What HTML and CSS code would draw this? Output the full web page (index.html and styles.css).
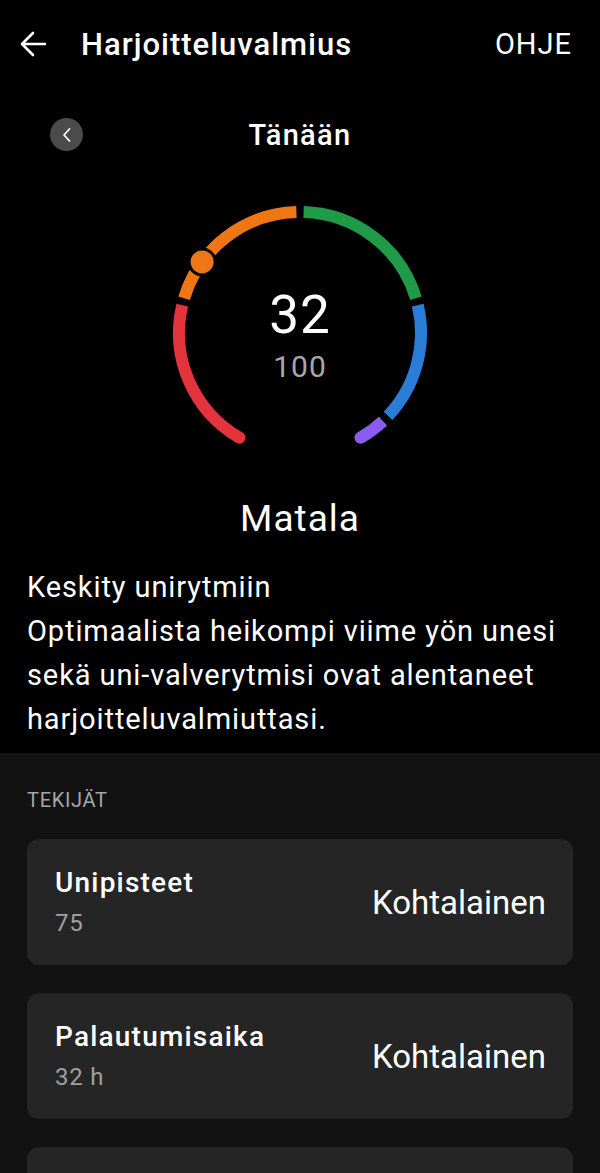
FILE: index.html
```html
<!DOCTYPE html>
<html lang="fi">
<head>
    <meta charset="UTF-8">
    <meta name="viewport" content="width=device-width, initial-scale=1.0">
    <title>Harjoitteluvalmius</title>
    <link rel="stylesheet" href="styles.css">
</head>
<body>
    <header class="topbar">
        <svg class="back-icon" width="28" height="28" viewBox="0 0 28 28">
            <path d="M26 14H3M14 3L3 14l11 11" fill="none" stroke="#fff" stroke-width="2.6" stroke-linecap="round" stroke-linejoin="round"/>
        </svg>
        <h1 class="title">Harjoitteluvalmius</h1>
        <span class="help">OHJE</span>
    </header>

    <div class="day-nav">
        <button class="prev-btn">
            <svg width="14" height="16" viewBox="0 0 14 16">
                <path d="M9.5 2L4 8l5.5 6" fill="none" stroke="#fff" stroke-width="1.8" stroke-linecap="round" stroke-linejoin="round"/>
            </svg>
        </button>
        <span class="day">Tänään</span>
    </div>

    <div class="gauge">
        <svg width="280" height="250" viewBox="0 0 280 250">
            <!-- 300 astetta, 3 astetta / piste -->
            <path d="M79.5 237.79A121 121 0 0 1 22.25 105.16" class="seg" stroke="#e3333b"/>
            <circle cx="79.5" cy="237.79" r="6" fill="#e3333b"/>
            <path d="M24.1 98.23A121 121 0 0 1 136.41 12.05" class="seg" stroke="#ef7615"/>
            <path d="M143.59 12.05A121 121 0 0 1 255.9 98.23" class="seg" stroke="#1f9a47"/>
            <path d="M257.75 105.16A121 121 0 0 1 228.06 215.98" class="seg" stroke="#2a7dd6"/>
            <path d="M222.98 221.06A121 121 0 0 1 200.5 237.79" class="seg" stroke="#8a5cf2"/>
            <circle cx="200.5" cy="237.79" r="6" fill="#8a5cf2"/>
            <circle cx="42.11" cy="61.88" r="13" fill="#ef7615" stroke="#000" stroke-width="3"/>
            <text x="140" y="133" class="score">32</text>
            <text x="140" y="177" class="max">100</text>
        </svg>
    </div>

    <div class="level">Matala</div>

    <div class="advice">
        <p>Keskity unirytmiin</p>
        <p>Optimaalista heikompi viime yön unesi sekä uni-valverytmisi ovat alentaneet harjoitteluvalmiuttasi.</p>
    </div>

    <section class="factors">
        <h2>TEKIJÄT</h2>
        <div class="factor-card">
            <div>
                <h3>Unipisteet</h3>
                <p>75</p>
            </div>
            <span class="rating">Kohtalainen</span>
        </div>
        <div class="factor-card">
            <div>
                <h3>Palautumisaika</h3>
                <p>32 h</p>
            </div>
            <span class="rating">Kohtalainen</span>
        </div>
        <div class="factor-card"></div>
    </section>
</body>
</html>
```

FILE: styles.css
```css
body {
    font-family: Roboto, 'Liberation Sans', sans-serif;
    margin: 0;
    background-color: #000;
    color: #fff;
}
.topbar {
    display: flex;
    align-items: center;
    height: 88px;
    padding: 0 28px 0 19px;
}
.back-icon {
    margin-right: 34px;
}
.title {
    flex: 1;
    margin: 0;
    font-size: 31px;
    font-weight: 500;
    letter-spacing: 1px;
}
.help {
    font-size: 29px;
    letter-spacing: 1px;
}
.day-nav {
    display: flex;
    align-items: center;
    justify-content: center;
    position: relative;
    height: 94px;
}
.prev-btn {
    position: absolute;
    left: 50px;
    top: 30px;
    width: 33px;
    height: 33px;
    border: none;
    border-radius: 50%;
    background-color: #4b4b4b;
    display: flex;
    align-items: center;
    justify-content: center;
    padding: 0;
}
.day {
    font-size: 29px;
    font-weight: 500;
    letter-spacing: 1.3px;
}
.gauge {
    display: flex;
    justify-content: center;
    margin-top: 18px;
}
.gauge svg {
    display: block;
}
.seg {
    fill: none;
    stroke-width: 12;
}
.score {
    font-family: Roboto, sans-serif;
    font-size: 53px;
    fill: #fff;
    text-anchor: middle;
    letter-spacing: 1px;
}
.max {
    font-family: Roboto, sans-serif;
    font-size: 30px;
    fill: #a8a8a8;
    text-anchor: middle;
    letter-spacing: 1px;
}
.level {
    margin-top: 47px;
    text-align: center;
    font-size: 37px;
    line-height: 44px;
    letter-spacing: 1px;
}
.advice {
    margin-top: 24px;
    padding: 0 27px 12px;
    font-size: 29px;
    line-height: 44px;
    letter-spacing: 0.9px;
}
.advice p {
    margin: 0;
}
.factors {
    background-color: #121212;
    padding: 35px 27px 20px;
}
.factors h2 {
    margin: 0 0 27px;
    font-size: 20px;
    line-height: 24px;
    font-weight: 400;
    color: #a6a6a6;
    letter-spacing: 0.7px;
}
.factor-card {
    display: flex;
    align-items: center;
    justify-content: space-between;
    height: 126px;
    padding: 0 27px 0 28px;
    margin-bottom: 28px;
    background-color: #252525;
    border-radius: 12px;
}
.factor-card h3 {
    margin: 0 0 6px;
    font-size: 28px;
    line-height: 36px;
    font-weight: 500;
    letter-spacing: 1.2px;
}
.factor-card p {
    margin: 0;
    font-size: 24px;
    line-height: 32px;
    color: #a0a0a0;
    letter-spacing: 0.8px;
}
.rating {
    font-size: 33px;
}
```
